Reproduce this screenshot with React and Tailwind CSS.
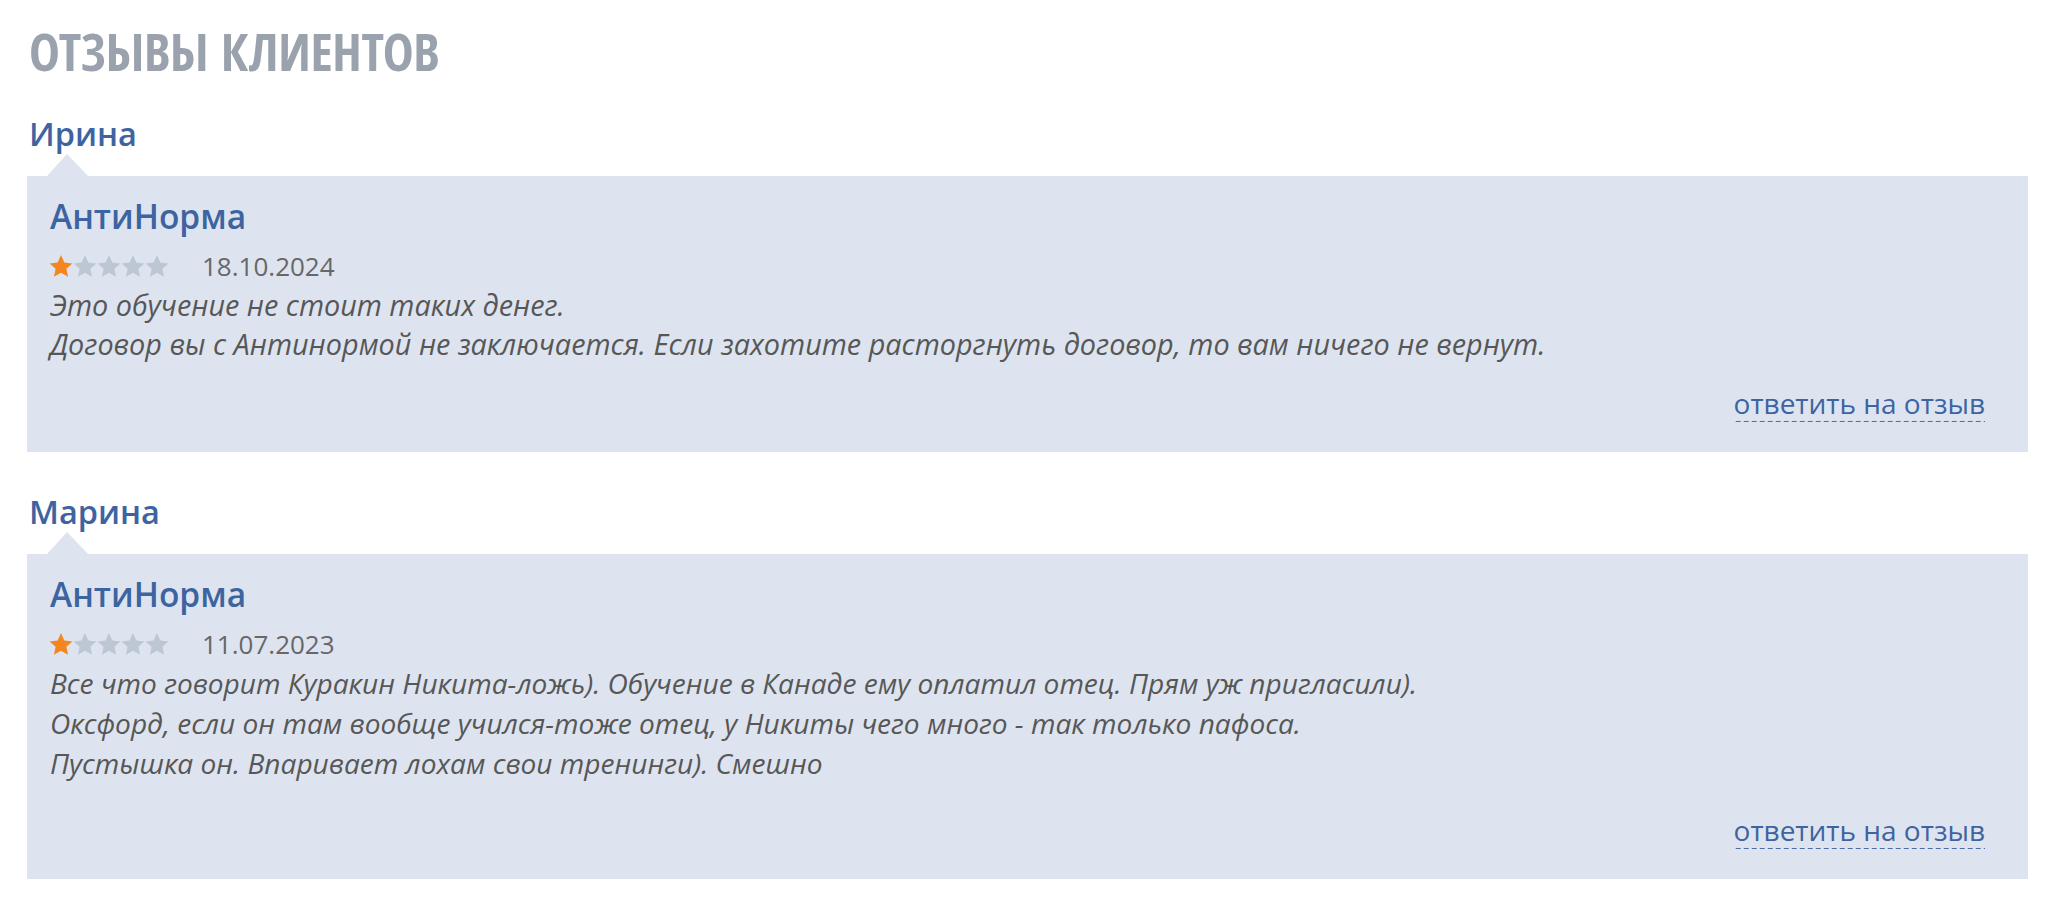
const reviews = [
  {
    author: 'Ирина',
    title: 'АнтиНорма',
    rating: 1,
    date: '18.10.2024',
    lines: [
      'Это обучение не стоит таких денег.',
      'Договор вы с Антинормой не заключается. Если захотите расторгнуть договор, то вам ничего не вернут.',
    ],
    body: 'text-[28.8px] leading-[39px]',
    link: 'mt-[25px]',
    spacing: 'mt-[36px]',
  },
  {
    author: 'Марина',
    title: 'АнтиНорма',
    rating: 1,
    date: '11.07.2023',
    lines: [
      'Все что говорит Куракин Никита-ложь). Обучение в Канаде ему оплатил отец. Прям уж пригласили).',
      'Оксфорд, если он там вообще учился-тоже отец, у Никиты чего много - так только пафоса.',
      'Пустышка он. Впаривает лохам свои тренинги). Смешно',
    ],
    body: 'text-[28.1px] leading-[40px]',
    link: 'mt-[32px]',
    spacing: 'mt-[40px]',
  },
];

const Star = ({ filled }) => (
  <svg viewBox="0 0 22 20" className="w-[24px] h-[22px]">
    <polygon
      points="11,0 14.06,6.79 21.46,7.6 15.95,12.61 17.47,19.9 11,16.2 4.53,19.9 6.05,12.61 0.54,7.6 7.94,6.79"
      fill={filled ? '#f5861f' : '#bdc7d4'}
    />
  </svg>
);

const Review = ({ review }) => (
  <div className={review.spacing}>
    <div className="ml-[2px] text-[32.5px] leading-[40px] font-semibold text-[#3d64a1]">
      {review.author}
    </div>
    <div className="ml-[20px] w-0 h-0 border-l-[20px] border-r-[21px] border-b-[22px] border-l-transparent border-r-transparent border-b-[#dde4ef]"></div>
    <div className="bg-[#dde4ef] pl-[23px] pr-[43px] pt-[20px] pb-[30px] flex flex-col">
      <div className="text-[33.5px] leading-[40px] font-semibold text-[#3d64a1]">{review.title}</div>
      <div className="mt-[13px] flex items-center h-[34px]">
        <div className="flex -ml-[1px]">
          {[1, 2, 3, 4, 5].map((n) => (
            <Star key={n} filled={n <= review.rating} />
          ))}
        </div>
        <span className="ml-[33px] text-[26px] leading-[34px] text-[#676767]">{review.date}</span>
      </div>
      <div className={`mt-[2px] italic text-[#575757] ${review.body}`}>
        {review.lines.map((line, i) => (
          <div key={i}>{line}</div>
        ))}
      </div>
      <div className={`${review.link} self-end`}>
        <a
          href="#"
          className="inline-block text-[28px] leading-[30px] pb-[4px] text-[#3d64a1] no-underline bg-[linear-gradient(to_right,#4a6fa8_5px,transparent_5px)] bg-[length:8px_1px] bg-repeat-x bg-bottom"
        >
          ответить на отзыв
        </a>
      </div>
    </div>
  </div>
);

export default function App() {
  return (
    <div
      className="min-h-screen bg-white pl-[27px] pr-[20px] pt-[23px]"
      style={{ fontFamily: '"Open Sans", "Noto Sans", sans-serif' }}
    >
      <h1
        className="ml-[2px] text-[52px] leading-[55px] font-bold uppercase tracking-[-0.3px] text-[#9aa2ad] font-stretch-condensed"
        style={{ fontFamily: '"Open Sans Condensed", "Liberation Sans Narrow", "DejaVu Sans Condensed", "Open Sans", sans-serif' }}
      >
        Отзывы клиентов
      </h1>
      {reviews.map((r, i) => (
        <Review key={i} review={r} />
      ))}
    </div>
  );
}
